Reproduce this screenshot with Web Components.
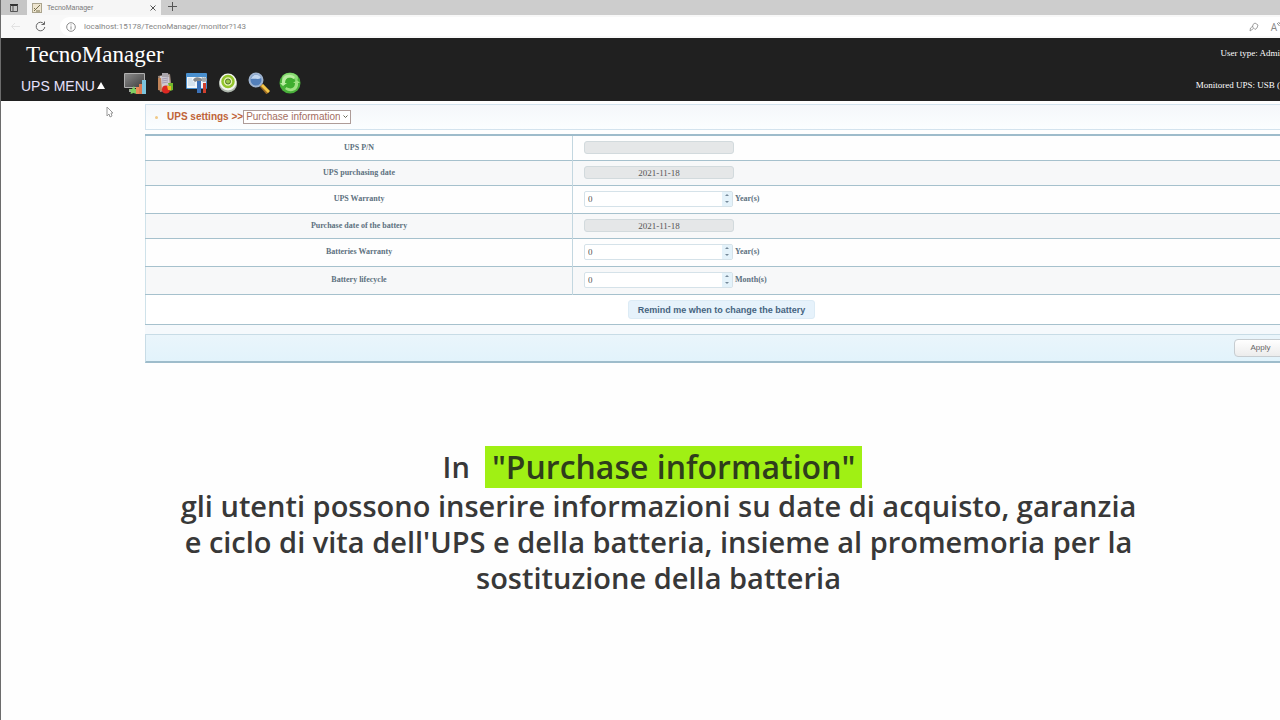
<!DOCTYPE html>
<html lang="it">
<head>
<meta charset="utf-8">
<title>TecnoManager</title>
<style>
html{height:100%}
body{margin:0;min-height:100%;box-sizing:border-box;border-left:1px solid #6c6c6c;background:#fefefe;font-family:"Liberation Sans",Arial,sans-serif;overflow-x:hidden}
</style>
</head>
<body>
<browser-bar page-title="TecnoManager" address="localhost:15178/TecnoManager/monitor?143"></browser-bar>
<app-header>
  <span slot="title">TecnoManager</span>
  <span slot="user">User type: Admi</span>
  <span slot="device">Monitored UPS: USB (</span>
</app-header>
<settings-page></settings-page>
<video-caption>
  <span slot="lead">In</span>
  <mark-label slot="mark">"Purchase information"</mark-label>
  <span>gli utenti possono inserire informazioni su date di acquisto, garanzia<br>e ciclo di vita dell'UPS e della batteria, insieme al promemoria per la<br>sostituzione della batteria</span>
</video-caption>
<mouse-pointer></mouse-pointer>

<script>
class Base extends HTMLElement{
  connectedCallback(){
    if(this.shadowRoot) return;
    this.attachShadow({mode:"open"}).innerHTML=this.render();
  }
}

customElements.define("browser-bar",class extends Base{
  render(){return `<style>
    :host{display:block;color:#777}
    svg{display:block;flex:none;fill:none;stroke:#8a8a8a}
    button{border:0;padding:0;background:none;display:flex}
    .tabs{display:flex;height:15px;background:#cdcdcd}
    .menu{width:26px;display:flex;align-items:center;justify-content:center;background:#c6c6c6}
    .tab{width:134px;display:flex;align-items:center;gap:5px;padding:0 5px;box-sizing:border-box;background:#f6f6f6;font-size:7px;line-height:12px}
    .tab span{flex:1}
    .new{padding:2px 7px}
    .bar{display:flex;align-items:center;height:23px;background:#f8f8f8;padding-left:9px;gap:14px}
    .addr{flex:1;display:flex;align-items:center;gap:8px;background:#fff;height:19px;border-radius:10px 0 0 10px;padding-left:6px;overflow:hidden;min-width:0}
    input{flex:1;min-width:0;border:0;padding:0;background:none;color:#858585;font:8px/12px Roboto,sans-serif;outline:0}
    .aa{display:flex;font:10px/12px "Open Sans",sans-serif;color:#888}
  </style>
  <div class="tabs">
    <button class="menu" aria-label="Tab actions"><svg width="8" height="8" viewBox="0 0 8 8"><path d="M0 1h8" style="stroke:#333;stroke-width:2"/><path d="M.5 1v6.500h7V1M3 2v5" style="stroke:#555"/></svg></button>
    <div class="tab"><svg width="10" height="10" viewBox="0 0 10 10"><rect x=".5" y=".5" width="9" height="9" fill="#eee5cf" stroke="#aaa48e"/><path d="M2 8 8 2M2 5l2 2M4 8h4" style="stroke:#77704f"/></svg><span>${this.getAttribute("page-title")}</span>
      <button aria-label="Close tab"><svg width="6" height="6" viewBox="0 0 6 6"><path d="m.5.5 5 5m0-5-5 5" style="stroke:#555"/></svg></button></div>
    <button class="new" aria-label="New tab"><svg width="9" height="9" viewBox="0 0 9 9"><path d="M4.500 0v9M0 4.500h9" style="stroke:#555"/></svg></button>
  </div>
  <div class="bar">
    <button aria-label="Back"><svg width="11" height="9" viewBox="0 0 11 9"><path d="M10 4.500H2M5 1 1.500 4.500 5 8" style="stroke:#e2e2e2"/></svg></button>
    <button aria-label="Reload"><svg width="11" height="11" viewBox="0 0 11 11"><path d="M9 3A4.300 4.300 0 1 0 9.800 6M9.500.5V3.500H6.500" style="stroke:#666"/></svg></button>
    <div class="addr"><svg width="10" height="10" viewBox="0 0 10 10"><circle cx="5" cy="5" r="4.300"/><path d="M5 4.300V7.500M5 2.400v1"/></svg>
      <input aria-label="Address" value="${this.getAttribute("address")}">
      <svg width="10" height="10" viewBox="0 0 10 10" style="margin-right:4px"><path d="M4 2.500 6 1l3 2-1 3-2 1.500L3.600 5zM1 9l3.500-2.500M1 9l.5-3L4 4" stroke-width=".8"/></svg>
      <span class="aa">A<svg width="3" height="6" viewBox="0 0 3 6"><path d="M0 2 2.500 5M1.500 1 3 3"/></svg></span></div>
  </div>`}
});

customElements.define("tool-icon",class extends Base{
  render(){
    const n=this.getAttribute("name");
    const art={
      monitor:`<defs><linearGradient id="g" x2="1" y2="1"><stop stop-color="#8a8a8a"/><stop offset="1" stop-color="#3f3f3f"/></linearGradient></defs><rect x="0" y="1" width="21" height="15" rx="1" fill="#b0b0b0"/><rect x="1" y="2" width="19" height="13" fill="url(#g)"/><path d="M5 17h8l2 3H5z" fill="#a5a5a5"/><path d="m10 14 1 3 3 .5-2 2 .5 2.500-3-1-3 1 .5-2.500-2-2 3-.5z" fill="#7fce62"/><rect x="12" y="15" width="4" height="7" fill="#e98a58"/><rect x="15" y="12" width="3" height="10" fill="#df7a50"/><rect x="18" y="8" width="4" height="14" fill="#7cc4dd"/>`,
      clipboard:`<path d="m3 4 12-2 2 16-12 2z" fill="#a08a7c"/><path d="m5 4 9-1 1 13-9 1z" fill="#cfcbd1"/><path d="M7 1h6l1 4H7z" fill="#a9a5ab"/><path d="m7 7 6-1M7 9l6-1M7 11l6-1" stroke="#a39ab3"/><path d="M3 6h3l1 13-4-1z" fill="#c08358"/><circle cx="11" cy="17.500" r="4" fill="#dc2822"/><path d="M13 11h5v7l-3 1z" fill="#72b72c"/><path d="M12 14h4v4h-3z" fill="#f2ba23"/>`,
      tools:`<rect x="0" y="1" width="21" height="16" rx="1" fill="#4a90cf"/><rect x="1" y="5" width="19" height="11" fill="#f1f6fa"/><path d="M2 7h4M2 9h5M2 11h7M2 13h7" stroke="#b9d0e2"/><path d="M7 8c2-4 6-3 9-1v2h-5l-2 1z" fill="#84888c"/><path d="M11 9h4v12h-4z" fill="#3c72b8"/><path d="M16 5c1 1 2 1 3 0l2 2c0 2-1 3-3 3s-3-2-2-5z" fill="#a5acb1"/><path d="M17 11h3v10h-3z" fill="#cf402f"/>`,
      disc:`<ellipse cx="11" cy="12" rx="9" ry="8.500" fill="#aeb7ad"/><circle cx="11" cy="10" r="8.500" fill="#f3f5ee"/><circle cx="11" cy="9.500" r="5.500" fill="#e4f2b4" stroke="#93c52c" stroke-width="2.500"/><circle cx="11" cy="9.500" r="2.500" fill="#9cc84a" stroke="#55742b"/>`,
      search:`<path d="m13 13 7 8" stroke="#9c6b25" stroke-width="4"/><path d="m14 13 7 7" stroke="#f4c647" stroke-width="3"/><circle cx="8" cy="8" r="6.500" fill="#527fba" stroke="#9fb4d0" stroke-width="2"/><path d="M3 7c1-5 8-6 10-1-3 2-6 0-10 1z" fill="#c3d7ef"/>`,
      refresh:`<circle cx="11" cy="11" r="10.500" fill="#49b03a"/><ellipse cx="11" cy="6" rx="8" ry="5" fill="#8adb74"/><circle cx="11" cy="11.500" r="6" fill="#3fae2f"/><path d="M3 11C2 4 10 0 16 5l-1.500 2C10 4 6 6 6 11l2 0-4 3-3-3z" fill="#b9eca0"/><path d="M19 11c1 7-7 11-13 6l1.500-2C12 18 16 16 16 11l-2 0 4-3 3 3z" fill="#9fe283"/>`}[n];
    return `<style>:host{display:block}button{display:block;border:0;padding:0;background:none}svg{display:block}</style>
    <button aria-label="${n}"><svg width="22" height="22" viewBox="0 0 22 22" fill="none">${art}</svg></button>`}
});

customElements.define("app-header",class extends Base{
  render(){return `<style>
    :host{display:flex;justify-content:space-between;height:63px;background:#202020;color:#fff;font-family:"Liberation Serif",serif;overflow:hidden}
    .left{display:flex;flex-direction:column;padding:3px 0 0 20px}
    .title{font-size:23px;line-height:28px;padding-left:5px}
    nav{display:flex;align-items:center;gap:9px;height:28px}
    .menu{border:0;padding:5px 10px 0 0;background:none;color:#e6e0fb;font:14px/18px "Liberation Sans",sans-serif;display:flex;align-items:center;gap:2px}
    .menu svg{display:block}
    .right{display:flex;flex-direction:column;align-items:flex-end;gap:20px;padding-top:9px;font-size:9px;line-height:12px;white-space:nowrap}
  </style>
  <div class="left"><div class="title"><slot name="title"></slot></div>
    <nav><button class="menu">UPS MENU<svg width="8" height="8" viewBox="0 0 8 8"><path d="M4 0 8 7H0z" fill="#fff"/></svg></button>
    ${["monitor","clipboard","tools","disc","search","refresh"].map(n=>`<tool-icon name="${n}"></tool-icon>`).join("")}</nav></div>
  <div class="right"><slot name="user"></slot><slot name="device"></slot></div>`}
});

customElements.define("settings-page",class extends Base{
  render(){
    const rows=[
      ["UPS P/N","",null],
      ["UPS purchasing date","2021-11-18",null],
      ["UPS Warranty","0","Year(s)"],
      ["Purchase date of the battery","2021-11-18",null],
      ["Batteries Warranty","0","Year(s)"],
      ["Battery lifecycle","0","Month(s)"]];
    const body=rows.map(([l,v,u],i)=>`<tr class="${u?"tall":""}"><th scope="row"><label for="f${i}">${l}</label></th><td>${
      u?`<div class="field"><span class="spin"><input id="f${i}" type="number" value="${v}"><span class="steps"><button aria-label="Increase"><svg width="4" height="3" viewBox="0 0 4 3"><path d="M2 0 4 2H0z"/></svg></button><button aria-label="Decrease"><svg width="4" height="3" viewBox="0 0 4 3"><path d="M0 0h4L2 2z"/></svg></button></span></span><b>${u}</b></div>`
       :`<div class="field"><input class="date" id="f${i}" readonly value="${v}"></div>`}</td></tr>`).join("");
    return `<style>
    :host{display:block;margin-left:144px;overflow:hidden;padding-top:3px;color:#5d7180}
    .wide{width:calc(100% + 17px)}
    .crumb{display:flex;align-items:center;height:24px;border:1px solid #d3e3ee;background:linear-gradient(#f5f7fa,#fbfeff);padding-left:9px;margin-bottom:4px}
    .dot{width:3px;height:3px;border-radius:2px;background:#f0c987;margin-right:9px}
    h1{margin:0;font-size:10px;line-height:14px;color:#bf6338}
    .pick{position:relative;display:flex;align-items:center}
    select{appearance:none;font:10px/12px "Liberation Sans",sans-serif;color:#a36e61;background:#fff;border:1px solid #ae9c98;border-radius:0;padding:0 10px 0 2px;height:14px;width:108px;margin:0}
    .pick svg{position:absolute;right:3px;top:5px;pointer-events:none}
    table{width:100%;border-collapse:collapse;table-layout:fixed;border-top:2px solid #9ebccb;border-left:1px solid #cfe2ea;font-family:"Liberation Serif",serif}
    tr{height:25px;border-bottom:1px solid #a6c1cd}
    tr.tall{height:28px}
    tr:nth-child(even){background:#f7f8f9}
    tr:last-child{height:30px;background:#fff}
    th,td{padding:0}
    th{width:37%;border-right:1px solid #c3d7e0;font-size:8px;line-height:12px}
    td{padding-left:11px}
    tr:last-child td{padding:0;text-align:center}
    .field{display:flex;align-items:center;gap:2px}
    .field b{font-size:8px;line-height:12px}
    input{font:9px/12px "Liberation Serif",serif;color:#555;box-sizing:border-box;margin:0;min-width:0}
    .date{width:150px;height:13px;padding:0;border:1px solid #d2dadd;border-radius:3px;background:#e5e7e8;text-align:center}
    .spin{display:flex;width:149px;height:16px;box-sizing:border-box;border:1px solid #d5e2e9;border-radius:2px;background:#fff}
    .spin input{flex:1;border:0;padding:0 0 0 3px;background:none;appearance:textfield}
    input::-webkit-inner-spin-button{appearance:none;margin:0}
    .steps{display:flex;flex-direction:column;width:10px;background:#e4f2fa}
    .steps button{flex:1;border:0;padding:0;background:none;display:flex;align-items:center;justify-content:center;fill:#75899a}
    .remind{height:19px;padding:0 9px;border:1px solid #dcebf5;border-radius:3px;background:#e6f2fb;color:#456480;font:bold 9px/12px "Liberation Sans",sans-serif}
    .space{height:9px;background:#f5f9fc}
    footer{display:flex;justify-content:flex-end;align-items:center;height:26px;border:1px solid #c8dce6;border-bottom:2px solid #9ebccb;background:linear-gradient(#eaf5fb,#e2f3fb);padding-right:9px}
    .apply{width:53px;height:18px;padding:0;border:1px solid #c6ccd0;border-radius:4px;background:linear-gradient(#fff,#ececec);color:#666;font:8px/12px "Liberation Sans",sans-serif}
    </style>
    <div class="wide">
      <div class="crumb"><span class="dot"></span><h1><label for="section">UPS settings &gt;&gt;</label></h1>
        <span class="pick"><select id="section"><option>Purchase information</option></select><svg width="5" height="4" viewBox="0 0 5 4"><path d="m.5.5 2 2 2-2" fill="none" stroke="#665"/></svg></span></div>
      <table><tbody>${body}<tr><td colspan="2"><button class="remind">Remind me when to change the battery</button></td></tr></tbody></table>
      <div class="space"></div>
      <footer><button class="apply">Apply</button></footer>
    </div>`}
});

customElements.define("mark-label",class extends Base{
  render(){return `<style>:host{display:block;background:#a0f014;color:#2f3d1c;font-size:32px;line-height:42px;padding:0 7px}</style><slot></slot>`}
});

customElements.define("video-caption",class extends Base{
  render(){return `<style>
    :host{display:block;margin-top:83px;margin-left:36px;text-align:center;color:#383838;font-family:"Open Sans",sans-serif;font-weight:600;font-size:29px;line-height:36px}
    .first{display:flex;justify-content:center;align-items:center;gap:15px;padding-right:12px}
    p{margin:0}
  </style>
  <div class="first"><slot name="lead"></slot><slot name="mark"></slot></div>
  <p><slot></slot></p>`}
});

customElements.define("mouse-pointer",class extends Base{
  render(){return `<style>:host{position:absolute;left:106px;top:106px}svg{display:block}</style>
  <svg width="8" height="12" viewBox="0 0 8 12"><path d="M1 1v9l2-2 1 3 2-1-1-3h2z" fill="#fff" stroke="#999"/></svg>`}
});
</script>
</body>
</html>
